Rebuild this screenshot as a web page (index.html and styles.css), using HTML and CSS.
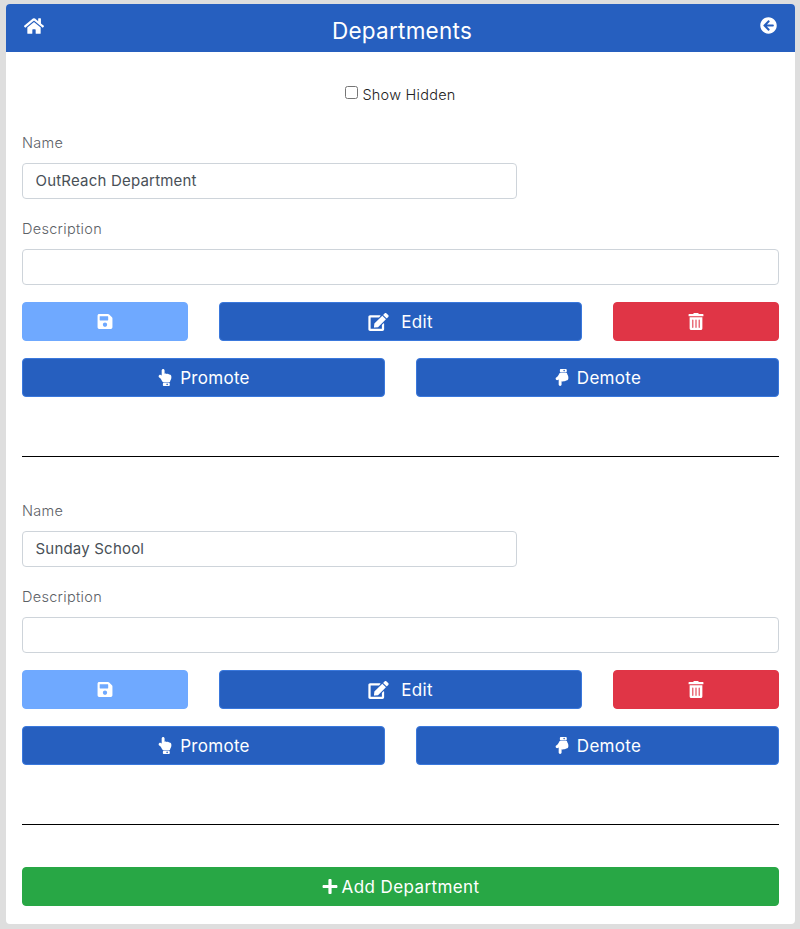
FILE: index.html
```html
<!DOCTYPE html>
<html lang="en">
<head>
<meta charset="utf-8">
<title>Departments</title>
<link rel="stylesheet" href="styles.css">
</head>
<body>
<svg class="sprite" aria-hidden="true">
  <symbol id="i-home" viewBox="0 0 576 512"><path d="M280.37 148.26L96 300.11V464a16 16 0 0 0 16 16l112.06-.29a16 16 0 0 0 15.92-16V368a16 16 0 0 1 16-16h64a16 16 0 0 1 16 16v95.64a16 16 0 0 0 16 16.05L464 480a16 16 0 0 0 16-16V300L295.67 148.26a12.19 12.19 0 0 0-15.3 0zM571.6 251.47L488 182.56V44.05a12 12 0 0 0-12-12h-56a12 12 0 0 0-12 12v72.61L318.47 43a48 48 0 0 0-61 0L4.34 251.47a12 12 0 0 0-1.6 16.9l25.5 31A12 12 0 0 0 45.15 301l235.22-193.74a12.19 12.19 0 0 1 15.3 0L530.9 301a12 12 0 0 0 16.9-1.6l25.5-31a12 12 0 0 0-1.7-16.93z"/></symbol>
  <symbol id="i-back" viewBox="0 0 512 512"><path d="M256 504C119 504 8 393 8 256S119 8 256 8s248 111 248 248-111 248-248 248zm28.9-143.6L209.4 288H392c13.3 0 24-10.7 24-24v-16c0-13.3-10.7-24-24-24H209.4l75.5-72.4c9.7-9.3 9.9-24.8.4-34.3l-11-10.9c-9.4-9.4-24.6-9.4-33.9 0L107.7 239c-9.4 9.4-9.4 24.6 0 33.9l132.7 132.7c9.4 9.4 24.6 9.4 33.9 0l11-10.9c9.5-9.5 9.3-25-.4-34.3z"/></symbol>
  <symbol id="i-save" viewBox="0 0 448 512"><path d="M433.941 129.941l-83.882-83.882A48 48 0 0 0 316.118 32H48C21.49 32 0 53.49 0 80v352c0 26.51 21.49 48 48 48h352c26.51 0 48-21.49 48-48V163.882a48 48 0 0 0-14.059-33.941zM224 416c-35.346 0-64-28.654-64-64 0-35.346 28.654-64 64-64s64 28.654 64 64c0 35.346-28.654 64-64 64zm96-304.52V212c0 6.627-5.373 12-12 12H76c-6.627 0-12-5.373-12-12V108c0-6.627 5.373-12 12-12h228.52c3.183 0 6.235 1.264 8.485 3.515l3.48 3.48A11.996 11.996 0 0 1 320 111.48z"/></symbol>
  <symbol id="i-edit" viewBox="0 0 576 512"><path d="M402.6 83.2l90.2 90.2c3.8 3.8 3.8 10 0 13.8L274.4 405.6l-92.8 10.3c-12.4 1.4-22.9-9.1-21.5-21.5l10.3-92.8L388.8 83.2c3.8-3.8 10-3.8 13.8 0zm162-22.9l-48.8-48.8c-15.2-15.2-39.9-15.2-55.2 0l-35.4 35.4c-3.8 3.8-3.8 10 0 13.8l90.2 90.2c3.8 3.8 10 3.8 13.8 0l35.4-35.4c15.2-15.3 15.2-40 0-55.2zM384 346.2V448H64V128h229.8c3.2 0 6.2-1.3 8.5-3.5l40-40c7.6-7.6 2.2-20.5-8.5-20.5H48C21.5 64 0 85.5 0 112v352c0 26.5 21.5 48 48 48h352c26.5 0 48-21.5 48-48V306.2c0-10.7-12.9-16-20.5-8.5l-40 40c-2.2 2.3-3.5 5.3-3.5 8.5z"/></symbol>
  <symbol id="i-trash" viewBox="0 0 448 512"><path d="M32 464a48 48 0 0 0 48 48h288a48 48 0 0 0 48-48V128H32zm272-256a16 16 0 0 1 32 0v224a16 16 0 0 1-32 0zm-96 0a16 16 0 0 1 32 0v224a16 16 0 0 1-32 0zm-96 0a16 16 0 0 1 32 0v224a16 16 0 0 1-32 0zM432 32H312l-9.4-18.7A24 24 0 0 0 281.1 0H166.8a23.72 23.72 0 0 0-21.4 13.3L136 32H16A16 16 0 0 0 0 48v32a16 16 0 0 0 16 16h416a16 16 0 0 0 16-16V48a16 16 0 0 0-16-16z"/></symbol>
  <symbol id="i-up" viewBox="0 0 384 512"><path d="M135.652 0c23.625 0 43.826 20.65 43.826 44.8v99.851c17.048-16.34 49.766-18.346 70.944 6.299 22.829-14.288 53.017-2.147 62.315 16.45C361.878 158.426 384 189.346 384 240c0 2.746-.203 13.276-.195 16 .168 61.971-31.065 76.894-38.315 123.731C343.683 391.404 333.599 400 321.786 400H150.261l-.001-.002c-18.366-.011-35.889-10.607-43.845-28.464C93.421 342.648 57.377 276.122 29.092 264 10.897 256.203.008 242.616 0 224c-.014-34.222 35.098-57.752 66.908-44.119 8.359 3.583 16.67 8.312 25.092 13.986V44.8c0-23.45 20.543-44.8 43.652-44.8zM336 448v32c0 17.673-14.327 32-32 32H160c-17.673 0-32-14.327-32-32v-32c0-17.673 14.327-32 32-32h144c17.673 0 32 14.327 32 32zm-56 16c0-13.255-10.745-24-24-24s-24 10.745-24 24 10.745 24 24 24 24-10.745 24-24z"/></symbol>
  <symbol id="i-down" viewBox="0 0 384 512"><g transform="matrix(1 0 0 -1 0 512)"><path d="M135.652 0c23.625 0 43.826 20.65 43.826 44.8v99.851c17.048-16.34 49.766-18.346 70.944 6.299 22.829-14.288 53.017-2.147 62.315 16.45C361.878 158.426 384 189.346 384 240c0 2.746-.203 13.276-.195 16 .168 61.971-31.065 76.894-38.315 123.731C343.683 391.404 333.599 400 321.786 400H150.261l-.001-.002c-18.366-.011-35.889-10.607-43.845-28.464C93.421 342.648 57.377 276.122 29.092 264 10.897 256.203.008 242.616 0 224c-.014-34.222 35.098-57.752 66.908-44.119 8.359 3.583 16.67 8.312 25.092 13.986V44.8c0-23.45 20.543-44.8 43.652-44.8zM336 448v32c0 17.673-14.327 32-32 32H160c-17.673 0-32-14.327-32-32v-32c0-17.673 14.327-32 32-32h144c17.673 0 32 14.327 32 32zm-56 16c0-13.255-10.745-24-24-24s-24 10.745-24 24 10.745 24 24 24 24-10.745 24-24z"/></g></symbol>
  <symbol id="i-plus" viewBox="0 0 448 512"><path d="M416 208H272V64c0-17.67-14.33-32-32-32h-32c-17.67 0-32 14.33-32 32v144H32c-17.67 0-32 14.33-32 32v32c0 17.67 14.33 32 32 32h144v144c0 17.67 14.33 32 32 32h32c17.67 0 32-14.33 32-32V304h144c17.67 0 32-14.33 32-32v-32c0-17.67-14.33-32-32-32z"/></symbol>
</svg>
<main class="card">
  <header class="topbar">
    <a class="topbar-link"><svg class="icon icon-home"><use href="#i-home"/></svg></a>
    <h1 class="title">Departments</h1>
    <a class="topbar-link"><svg class="icon icon-back"><use href="#i-back"/></svg></a>
  </header>
  <div class="content">
    <label class="show-hidden"><input type="checkbox" class="check"><span>Show Hidden</span></label>

    <section class="dept dept-first">
      <div class="field">
        <label class="label">Name</label>
        <input class="input input-name" type="text" value="OutReach Department">
      </div>
      <div class="field field-desc">
        <label class="label">Description</label>
        <input class="input" type="text" value="">
      </div>
      <div class="row row-three">
        <button class="btn btn-light"><svg class="icon icon-btn"><use href="#i-save"/></svg></button>
        <button class="btn btn-blue"><svg class="icon icon-edit"><use href="#i-edit"/></svg><span class="edit-text">Edit</span></button>
        <button class="btn btn-red"><svg class="icon icon-btn"><use href="#i-trash"/></svg></button>
      </div>
      <div class="row row-two">
        <button class="btn btn-blue"><svg class="icon icon-btn"><use href="#i-up"/></svg><span>Promote</span></button>
        <button class="btn btn-blue"><svg class="icon icon-btn"><use href="#i-down"/></svg><span>Demote</span></button>
      </div>
    </section>
    <hr class="rule">

    <section class="dept">
      <div class="field">
        <label class="label">Name</label>
        <input class="input input-name" type="text" value="Sunday School">
      </div>
      <div class="field field-desc">
        <label class="label">Description</label>
        <input class="input" type="text" value="">
      </div>
      <div class="row row-three">
        <button class="btn btn-light"><svg class="icon icon-btn"><use href="#i-save"/></svg></button>
        <button class="btn btn-blue"><svg class="icon icon-edit"><use href="#i-edit"/></svg><span class="edit-text">Edit</span></button>
        <button class="btn btn-red"><svg class="icon icon-btn"><use href="#i-trash"/></svg></button>
      </div>
      <div class="row row-two">
        <button class="btn btn-blue"><svg class="icon icon-btn"><use href="#i-up"/></svg><span>Promote</span></button>
        <button class="btn btn-blue"><svg class="icon icon-btn"><use href="#i-down"/></svg><span>Demote</span></button>
      </div>
    </section>
    <hr class="rule">

    <button class="btn btn-green"><svg class="icon icon-btn"><use href="#i-plus"/></svg><span>Add Department</span></button>
  </div>
</main>
</body>
</html>
```

FILE: styles.css
```css
* { box-sizing: border-box; }
html, body { height: 100%; }
body {
  margin: 0;
  padding: 4px 5px 5px 6px;
  background: #dedede;
  font-family: "Inter", "Noto Sans", sans-serif;
  color: #212529;
}
.sprite { display: none; }
.card {
  background: #fff;
  border-radius: 4px;
  height: 920px;
  overflow: hidden;
}
.topbar {
  height: 48px;
  background: #265fbf;
  color: #fff;
  display: flex;
  align-items: center;
  justify-content: space-between;
  padding: 0 18px;
}
.title {
  margin: 4px 0 0;
  font-size: 22.5px;
  font-weight: 400;
  letter-spacing: 0.25px;
}
.topbar-link { display: flex; color: #fff; margin-top: -5px; }
.icon { fill: currentColor; display: block; flex: none; }
.icon-home { width: 20px; height: 18px; }
.icon-back { width: 17px; height: 17px; }
.content { padding: 0 16px; }
.show-hidden {
  display: flex;
  align-items: center;
  justify-content: center;
  margin-top: 32px;
  height: 20px;
  font-size: 14.5px;
  font-weight: 300;
  letter-spacing: 0.25px;
  gap: 4px;
  color: #222;
}
.check { margin: 0 0 3px; width: 13px; height: 13px; }
.dept { margin-top: 43px; }
.dept-first { margin-top: 28px; }
.field { display: flex; flex-direction: column; }
.field-desc { margin-top: 19px; }
.label {
  font-size: 14.5px;
  font-weight: 300;
  line-height: 22px;
  color: #5c6166;
  margin-bottom: 9px;
  letter-spacing: 0.3px;
}
.input {
  height: 36px;
  border: 1px solid #ced4da;
  border-radius: 4px;
  padding: 0 12.5px 2px;
  font: inherit;
  font-size: 15px;
  color: #495057;
  background: #fff;
  letter-spacing: 0.2px;
}
.input-name { width: 495px; }
.row { display: grid; gap: 31px; }
.row-three { grid-template-columns: 166px 1fr 166px; margin-top: 17px; }
.row-two { grid-template-columns: 1fr 1fr; margin-top: 17px; }
.btn {
  height: 39px;
  border-radius: 4px;
  border: 1px solid transparent;
  color: #fff;
  font: inherit;
  font-size: 17px;
  letter-spacing: 0.3px;
  display: flex;
  align-items: center;
  justify-content: center;
  gap: 7px;
  padding: 0;
}
.btn-light { background: #6fa9ff; border-color: #6fa9ff; }
.btn-blue { background: #265fbf; border-color: #3a78dc; }
.btn-red { background: #e03546; border-color: #e03546; }
.btn-green {
  background: #28a745;
  border-color: #28a745;
  width: 100%;
  margin-top: 42px;
  gap: 4px;
  letter-spacing: 0.4px;
}
.icon-btn { width: 16px; height: 17px; }
.icon-edit { width: 21px; height: 18px; }
.edit-text { margin-left: 5px; }
.rule {
  border: 0;
  border-top: 1px solid #000;
  margin: 59px 0 0;
  height: 0;
}
```
